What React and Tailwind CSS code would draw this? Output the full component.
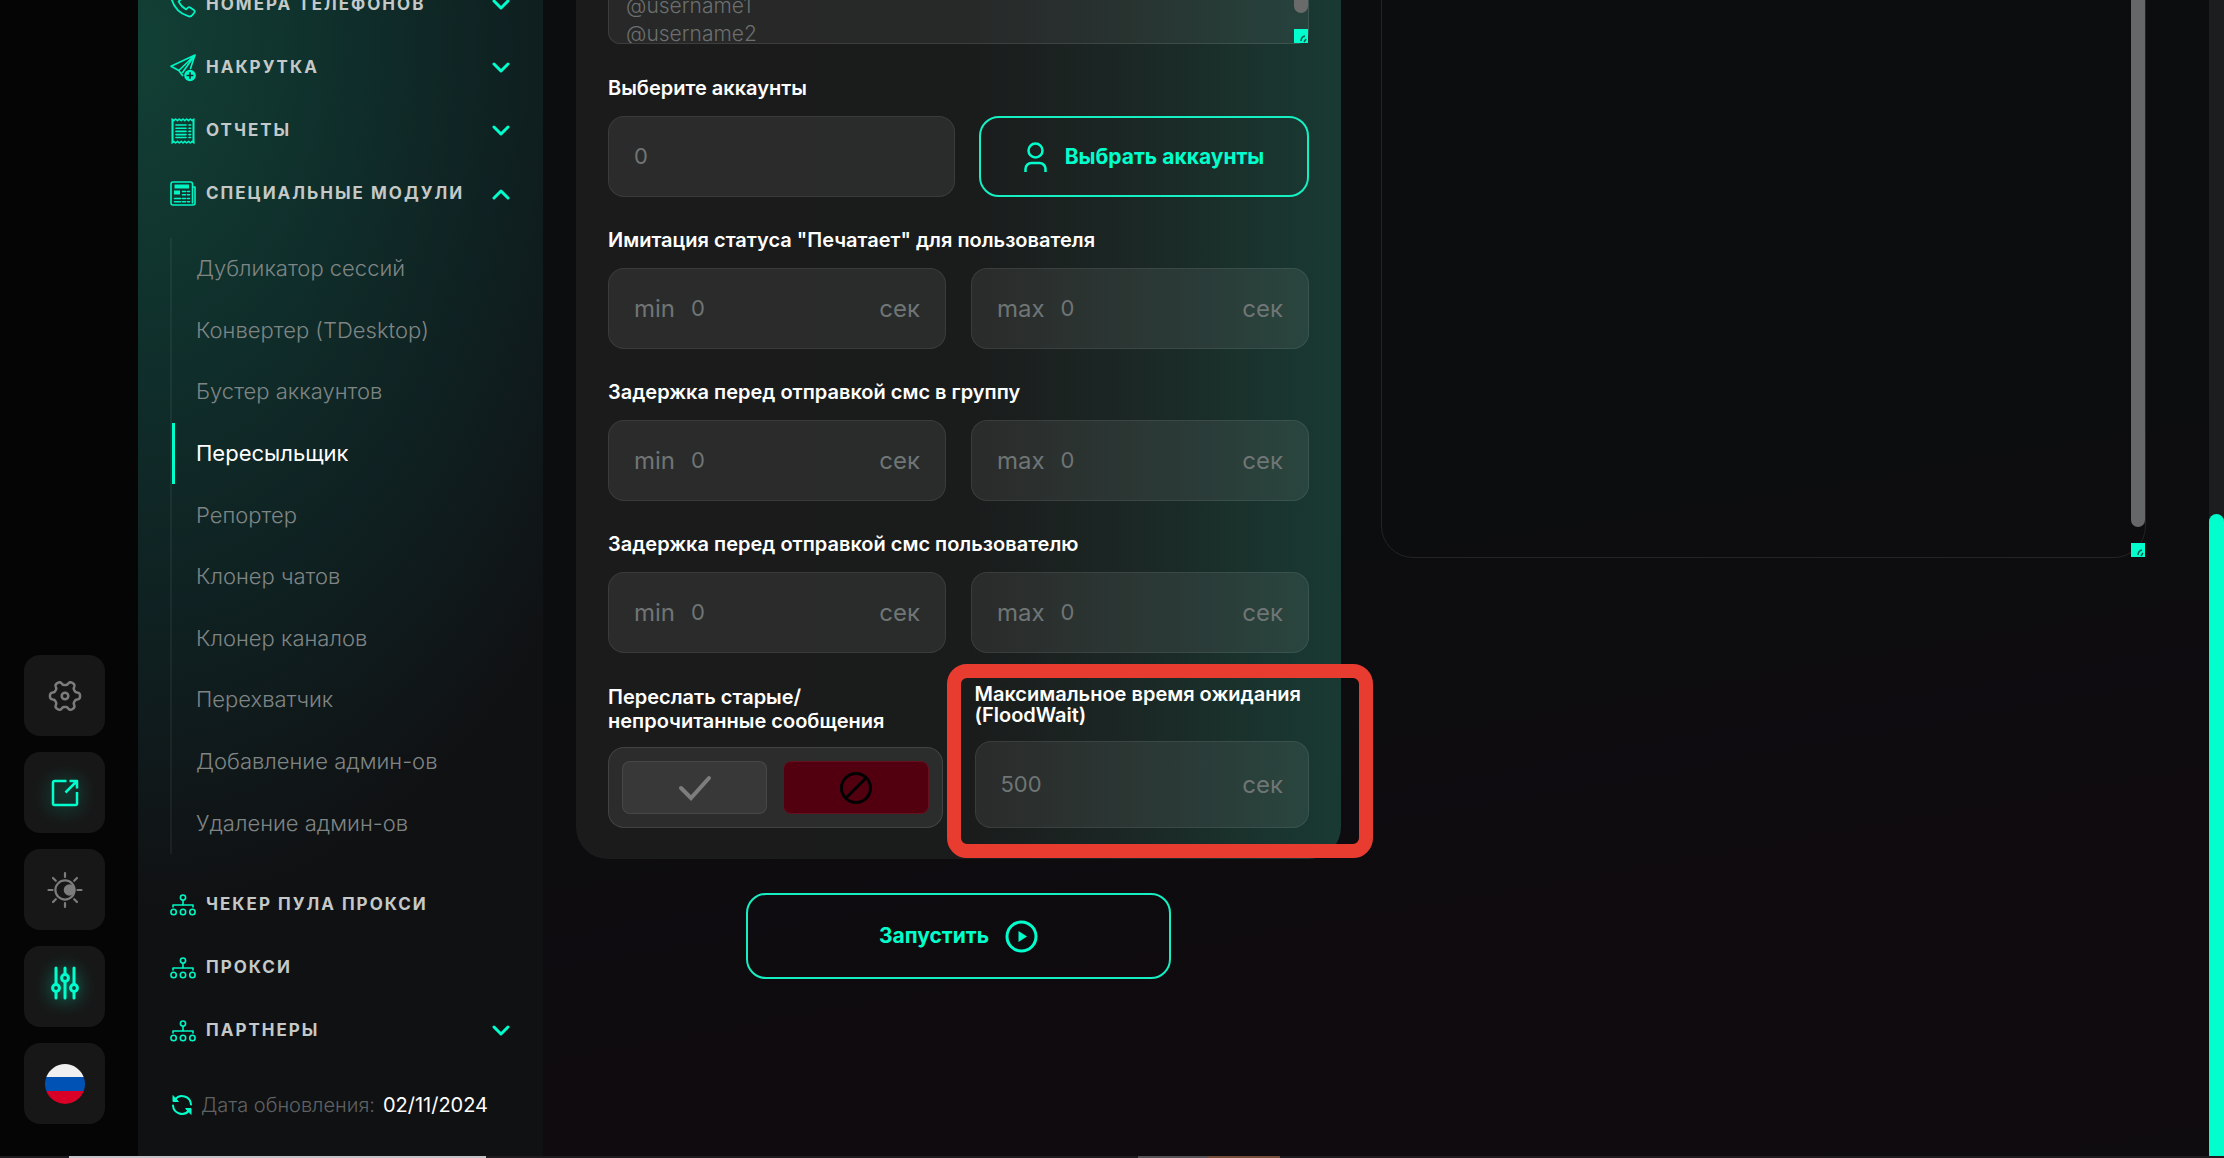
import React from "react";

const GEAR =
  Array.from({ length: 120 }, (_, i) => {
    const a = (i * Math.PI) / 60;
    const r = 13 + 2.1 * Math.tanh(2 * Math.cos(6 * a));
    return `${i ? "L" : "M"}${(17 + r * Math.cos(a)).toFixed(2)} ${(17 + r * Math.sin(a)).toFixed(2)}`;
  }).join("") + "Z";

const stroke = { fill: "none", stroke: "currentColor", strokeLinecap: "round", strokeLinejoin: "round" };

function Chevron({ up }) {
  return (
    <svg width="18" height="12" viewBox="0 0 18 12" {...stroke} strokeWidth="3" aria-hidden="true" className="shrink-0 text-[#00ffcc]">
      <path d={up ? "M2 10l7-7 7 7" : "M2 2l7 7 7-7"} />
    </svg>
  );
}

function PhoneIcon() {
  return (
    <svg width="26" height="26" viewBox="0 0 26 26" {...stroke} strokeWidth="1.8" aria-hidden="true">
      <path d="M3 3.5l3-2.2c.8-.5 1.700-.3 2.200.5l2.500 4c.5.8.3 1.600-.4 2.200L8.600 9.400c1.500 3.300 4.200 6.200 7.600 8l1.800-1.700c.6-.6 1.500-.7 2.200-.2l3.900 2.800c.7.5.9 1.500.3 2.200l-2 2.500c-1 1.300-2.600 1.800-4.200 1.200C9.700 21.400 4 15.300 1.700 7.500 1.200 5.900 1.700 4.500 3 3.500z" />
    </svg>
  );
}

function SendIcon() {
  return (
    <svg width="26" height="28" viewBox="0 0 26 28" {...stroke} strokeWidth="1.600" aria-hidden="true">
      <path d="M25 1L1 12.200l7.800 4.300L25 1zM25 1l-4.500 13.500M25 1L12.500 18.500M8.800 16.500l3.700 5" />
      <circle cx="20" cy="21.500" r="5.800" fill="currentColor" stroke="none" />
      <path d="M20 18.700v5.600M17.200 21.500h5.600" stroke="#0f2c29" strokeWidth="1.600" />
    </svg>
  );
}

function ReportIcon() {
  return (
    <svg width="26" height="28" viewBox="0 0 26 28" {...stroke} strokeWidth="1.600" aria-hidden="true">
      <path d="M2.500 3v22M23.500 3v22" strokeWidth="2" />
      <path d="M2 2l1.800 1.600L5.600 2l1.900 1.600L9.300 2l1.900 1.600L13 2l1.800 1.600L16.700 2l1.800 1.600L20.300 2l1.900 1.600L24 2M2 26l1.800-1.600L5.600 26l1.900-1.600L9.300 26l1.900-1.600L13 26l1.800-1.600 1.900 1.600 1.800-1.600 1.800 1.600 1.900-1.600L24 26" />
      <path d="M6 8h10M6 11.200h10M6 14.400h10M6 17.600h10M6 20.500h10M19 8h1.500M19 11.200h1.500M19 14.400h1.500M19 17.600h1.500M19 20.500h1.500" />
    </svg>
  );
}

function NewsIcon() {
  return (
    <svg width="26" height="25" viewBox="0 0 26 25" {...stroke} strokeWidth="1.600" aria-hidden="true">
      <path d="M22.500 22V3a2 2 0 0 0-2-2H3a2 2 0 0 0-2 2v19a2 2 0 0 0 2 2h20a2 2 0 0 0 2-2V6h-2.500" />
      <path d="M4.500 5.500h14.500" strokeWidth="4" strokeLinecap="butt" />
      <path d="M4 11.500h6" strokeWidth="4" strokeLinecap="butt" />
      <path d="M12.500 10.500h3M17.500 10.500h2M12.500 13.700h3M17.500 13.700h2M4.500 17.500h6M12.500 17.500h3M17.500 17.500h2M4.500 20.800h6M12.500 20.800h3M17.500 20.800h2" />
    </svg>
  );
}

function TreeIcon() {
  return (
    <svg width="26" height="22" viewBox="0 0 26 22" {...stroke} strokeWidth="1.600" aria-hidden="true">
      <circle cx="13" cy="3.600" r="2.600" />
      <circle cx="3.600" cy="18" r="2.700" />
      <circle cx="13" cy="18" r="2.700" />
      <circle cx="22.400" cy="18" r="2.700" />
      <path d="M13 6.200v5M3 13v-2h20v2" />
    </svg>
  );
}

function RefreshIcon() {
  return (
    <svg width="22" height="22" viewBox="0 0 22 22" {...stroke} strokeWidth="2" aria-hidden="true" className="shrink-0 text-[#00ffcc]">
      <path d="M4 5.500a9 9 0 0 1 16 5M18 16.500a9 9 0 0 1-16-5" />
      <path d="M2 2v5.500h5z M20 20v-5.500h-5z" fill="currentColor" strokeWidth="1" />
    </svg>
  );
}

function RailButton({ label, children }) {
  return (
    <button type="button" aria-label={label} className="flex size-[81px] items-center justify-center rounded-2xl bg-[#171717] text-[#7c7c7c]">
      {children}
    </button>
  );
}

function Rail() {
  return (
    <aside className="flex w-[138px] shrink-0 flex-col justify-end gap-4 bg-[#050505] pb-8 pl-6">
      <RailButton label="Настройки">
        <svg width="34" height="34" viewBox="0 0 34 34" {...stroke} strokeWidth="2.500" aria-hidden="true">
          <path d={GEAR} />
          <circle cx="17" cy="17" r="3.300" />
        </svg>
      </RailButton>
      <RailButton label="Открыть в новом окне">
        <svg width="30" height="30" viewBox="0 0 30 30" {...stroke} strokeWidth="2.500" strokeLinecap="butt" aria-hidden="true" className="overflow-visible text-[#00ffcc] drop-shadow-[0_2px_9px_#00ffcc99]">
          <path d="M16.500 3H4.500A1.500 1.500 0 0 0 3 4.500v21A1.500 1.500 0 0 0 4.500 27h21a1.500 1.500 0 0 0 1.500-1.500V14M19.500 3H27v7.500M27 3L15.500 14.500" />
        </svg>
      </RailButton>
      <RailButton label="Сменить тему">
        <svg width="36" height="38" viewBox="0 0 36 38" {...stroke} strokeWidth="2.200" aria-hidden="true">
          <circle cx="18" cy="19" r="9.600" />
          <circle cx="22.500" cy="19" r="5.800" fill="currentColor" stroke="none" />
          <path d="M18 2v4M18 32v4M1.500 19h4M30.500 19h4M6 7l2.800 2.800M27.200 28.200L30 31M30 7l-2.800 2.800M8.800 28.200L6 31" />
        </svg>
      </RailButton>
      <RailButton label="Фильтры">
        <svg width="30" height="34" viewBox="0 0 30 34" {...stroke} strokeWidth="3" aria-hidden="true" className="mb-2 overflow-visible text-[#00ffcc] drop-shadow-[0_2px_9px_#00ffcc99]">
          <path d="M6 2v16M6 26v6M15 2v6M15 16v16M24 2v16M24 26v6" />
          <circle cx="6" cy="22" r="3.400" />
          <circle cx="15" cy="12" r="3.400" />
          <circle cx="24" cy="22" r="3.400" />
        </svg>
      </RailButton>
      <RailButton label="Русский язык">
        <svg width="40" height="40" viewBox="0 0 40 40" aria-hidden="true">
          <path d="M1.300 13a20 20 0 0 1 37.400 0z" fill="#f0f0f0" />
          <path d="M1.300 13h37.400a20 20 0 0 1 0 14H1.300a20 20 0 0 1 0-14z" fill="#0052b4" />
          <path d="M1.300 27h37.400a20 20 0 0 1-37.400 0z" fill="#d80027" />
        </svg>
      </RailButton>
    </aside>
  );
}

function NavGroup({ icon, title, chevron }) {
  return (
    <button type="button" className="flex h-[63px] w-full shrink-0 items-center gap-[10px] text-left">
      <span className="flex w-[26px] shrink-0 justify-center text-[#00f5c4]">{icon}</span>
      <span className="flex-1 whitespace-nowrap text-[17px] font-bold tracking-[2px] text-[#c4c9c8]">{title}</span>
      {chevron && <Chevron up={chevron === "up"} />}
    </button>
  );
}

const MODULES = [
  "Дубликатор сессий",
  "Конвертер (TDesktop)",
  "Бустер аккаунтов",
  "Пересыльщик",
  "Репортер",
  "Клонер чатов",
  "Клонер каналов",
  "Перехватчик",
  "Добавление админ-ов",
  "Удаление админ-ов",
];

function Sidebar() {
  return (
    <nav className="flex w-[405px] shrink-0 flex-col overflow-hidden bg-[radial-gradient(ellipse_560px_860px_at_0_4%,#124035_0%,#0f2d2a_40%,#0f1f20_70%,#101113_100%)] pr-[33px] pl-8">
      <div className="-mt-[27px] flex flex-col">
        <NavGroup icon={<PhoneIcon />} title="НОМЕРА ТЕЛЕФОНОВ" chevron="down" />
        <NavGroup icon={<SendIcon />} title="НАКРУТКА" chevron="down" />
        <NavGroup icon={<ReportIcon />} title="ОТЧЕТЫ" chevron="down" />
        <NavGroup icon={<NewsIcon />} title="СПЕЦИАЛЬНЫЕ МОДУЛИ" chevron="up" />
      </div>
      <ul className="mt-[13px] mb-[19px] grid h-[616px] shrink-0 auto-rows-fr border-l-2 border-white/5">
        {MODULES.map((name) => {
          const active = name === "Пересыльщик";
          return (
            <li key={name} className="grid">
              <a
                href="#"
                aria-current={active ? "page" : undefined}
                className={
                  active
                    ? "flex items-center border-l-[3px] border-[#00ffcc] pl-[21px] text-[22px] text-white"
                    : "flex items-center border-l-[3px] border-transparent pl-[21px] text-[22px] font-light text-[#7f8584]"
                }
              >
                {name}
              </a>
            </li>
          );
        })}
      </ul>
      <NavGroup icon={<TreeIcon />} title="ЧЕКЕР ПУЛА ПРОКСИ" />
      <NavGroup icon={<TreeIcon />} title="ПРОКСИ" />
      <NavGroup icon={<TreeIcon />} title="ПАРТНЕРЫ" chevron="down" />
      <p className="mt-[29px] flex items-center gap-2 whitespace-nowrap pl-px text-[20px] leading-7 font-light text-[#5f6162]">
        <RefreshIcon />
        Дата обновления:
        <time className="font-normal text-white">02/11/2024</time>
      </p>
    </nav>
  );
}

const BOX = "flex w-full min-w-0 items-center rounded-2xl border border-white/8 bg-white/7 px-[25px] text-2xl text-[#6f7575]";
const INPUT = "min-w-0 flex-1 bg-transparent text-[22px] outline-none placeholder:text-[#6f7575]";

function RangeField({ title, id }) {
  return (
    <fieldset className="mt-[31px]">
      <legend className="mb-4 text-xl leading-6 font-semibold text-white">{title}</legend>
      <div className="grid grid-cols-2 gap-[25px]">
        {["min", "max"].map((bound) => (
          <div key={bound} className={`${BOX} h-[81px] gap-4`}>
            <label htmlFor={`${id}-${bound}`}>{bound}</label>
            <input id={`${id}-${bound}`} placeholder="0" className={INPUT} />
            <span>сек</span>
          </div>
        ))}
      </div>
    </fieldset>
  );
}

function ResizeCorner() {
  return (
    <svg width="14" height="14" viewBox="0 0 14 14" aria-hidden="true" className="mt-4">
      <path d="M0 0h14v14H0z" fill="#00ffcc" />
      <path d="M7 12q0-4 4-5M10 13l2-3" fill="none" stroke="#0b5c4d" strokeWidth="1.500" />
    </svg>
  );
}

function SettingsCard() {
  return (
    <section className="rounded-b-[32px] bg-[linear-gradient(90deg,#1b1b1c_0%,#1a1b1b_50%,#1b2724_72%,#193a33_100%)] px-8 pb-[31px]">
      <div className="relative -mt-16">
        <textarea
          aria-label="Список получателей"
          placeholder={"@username1\n@username2"}
          className="block h-[108px] w-full resize-none overflow-hidden rounded-xl border border-white/10 bg-white/6 px-[17px] pt-[55px] text-[21px] leading-7 font-light outline-none placeholder:text-[#6b706f]"
        />
        <div className="absolute right-px bottom-px flex flex-col items-center">
          <div className="h-16 w-[14px] rounded-full bg-[#6a6a6b]" />
          <ResizeCorner />
        </div>
      </div>

      <div className="mt-8">
        <label htmlFor="accounts" className="mb-4 block text-xl leading-6 font-semibold text-white">
          Выберите аккаунты
        </label>
        <div className="flex gap-6">
          <div className={`${BOX} h-[81px]`}>
            <input id="accounts" placeholder="0" className={INPUT} />
          </div>
          <button type="button" className="flex w-[330px] shrink-0 items-center justify-center gap-[18px] rounded-[20px] border-2 border-[#15efc2] text-[21px] font-bold text-[#00ffcc]">
            <svg width="23" height="30" viewBox="0 0 23 30" {...stroke} strokeLinecap="butt" strokeWidth="2.500" aria-hidden="true">
              <circle cx="11.500" cy="8.500" r="7" />
              <path d="M1.500 30v-3a6 6 0 0 1 6-6h8a6 6 0 0 1 6 6v3" />
            </svg>
            Выбрать аккаунты
          </button>
        </div>
      </div>

      <RangeField id="typing" title={'Имитация статуса "Печатает" для пользователя'} />
      <RangeField id="group-delay" title="Задержка перед отправкой смс в группу" />
      <RangeField id="user-delay" title="Задержка перед отправкой смс пользователю" />

      <div className="mt-[31px] grid grid-cols-2 items-end gap-8">
        <fieldset>
          <legend className="mb-[14px] text-xl leading-6 font-semibold text-white">
            Переслать старые/
            <br />
            непрочитанные сообщения
          </legend>
          <div className="grid h-[81px] grid-cols-2 gap-4 rounded-2xl border border-white/10 bg-white/8 p-[13px]">
            <button type="button" aria-label="Да" className="flex items-center justify-center rounded-lg border border-white/8 bg-white/6 text-[#7d7d7d]">
              <svg width="34" height="26" viewBox="0 0 34 26" {...stroke} strokeLinejoin="miter" strokeWidth="4" aria-hidden="true">
                <path d="M3 13l10 10L31 3" />
              </svg>
            </button>
            <button type="button" aria-label="Нет" className="flex items-center justify-center rounded-lg border border-[#66111f] bg-[#520010] text-black">
              <svg width="34" height="34" viewBox="0 0 34 34" {...stroke} strokeWidth="3" aria-hidden="true">
                <circle cx="17" cy="17" r="14.500" />
                <path d="M7 27L27 7" />
              </svg>
            </button>
          </div>
        </fieldset>
        <div className="relative">
          <label htmlFor="flood-wait" className="mb-[15px] block text-xl leading-[21px] font-semibold text-white">
            Максимальное время ожидания (FloodWait)
          </label>
          <div className={`${BOX} h-[87px]`}>
            <input id="flood-wait" placeholder="500" className={INPUT} />
            <span>сек</span>
          </div>
          <div className="pointer-events-none absolute -top-5 -right-16 -bottom-[30px] -left-7 z-10 rounded-[20px] border-[14px] border-[#e83c30]" />
        </div>
      </div>
    </section>
  );
}

function Main() {
  return (
    <main className="grid min-w-0 flex-1 grid-cols-2 items-start gap-10 pr-[63px] pl-[33px]">
      <div className="min-w-0">
        <SettingsCard />
        <button type="button" className="mx-auto mt-[34px] flex h-[86px] w-[425px] items-center justify-center gap-4 rounded-[20px] border-2 border-[#15efc2] text-[21px] font-bold text-[#00ffcc]">
          Запустить
          <svg width="33" height="33" viewBox="0 0 33 33" {...stroke} strokeWidth="3" aria-hidden="true">
            <circle cx="16.500" cy="16.500" r="14.500" />
            <path d="M13.500 11l8.500 5.500-8.500 5.500z" fill="currentColor" stroke="none" />
          </svg>
        </button>
      </div>
      <div className="relative -mt-10">
        <textarea aria-label="Журнал" readOnly className="block h-[598px] w-full resize-none rounded-[32px] border border-[#222426] bg-transparent outline-none" />
        <div className="absolute right-px bottom-px flex flex-col items-center">
          <div className="h-[566px] w-[14px] rounded-full bg-[#666769]" />
          <ResizeCorner />
        </div>
      </div>
    </main>
  );
}

export default function App() {
  return (
    <div className="flex h-screen flex-col overflow-hidden bg-[linear-gradient(170deg,#0b0d0f_0%,#0c0d0f_50%,#0f0b0f_80%,#0f0c0f_100%)] font-['Inter','Noto_Sans',sans-serif]">
      <div className="flex min-h-0 flex-1">
        <Rail />
        <Sidebar />
        <Main />
        <div className="flex w-[15px] shrink-0 flex-col bg-[#1c1d1f]">
          <div className="basis-[514px]" />
          <div className="flex-1 rounded-t-full bg-[#00ffcc]" />
        </div>
      </div>
      <div className="flex h-[2px] shrink-0 bg-[#1f1c20]">
        <div className="ml-[69px] w-[417px] bg-[#c4c3c7]" />
        <div className="ml-[652px] w-[70px] bg-[#555356]" />
        <div className="w-[72px] bg-[#74503c]" />
      </div>
    </div>
  );
}
